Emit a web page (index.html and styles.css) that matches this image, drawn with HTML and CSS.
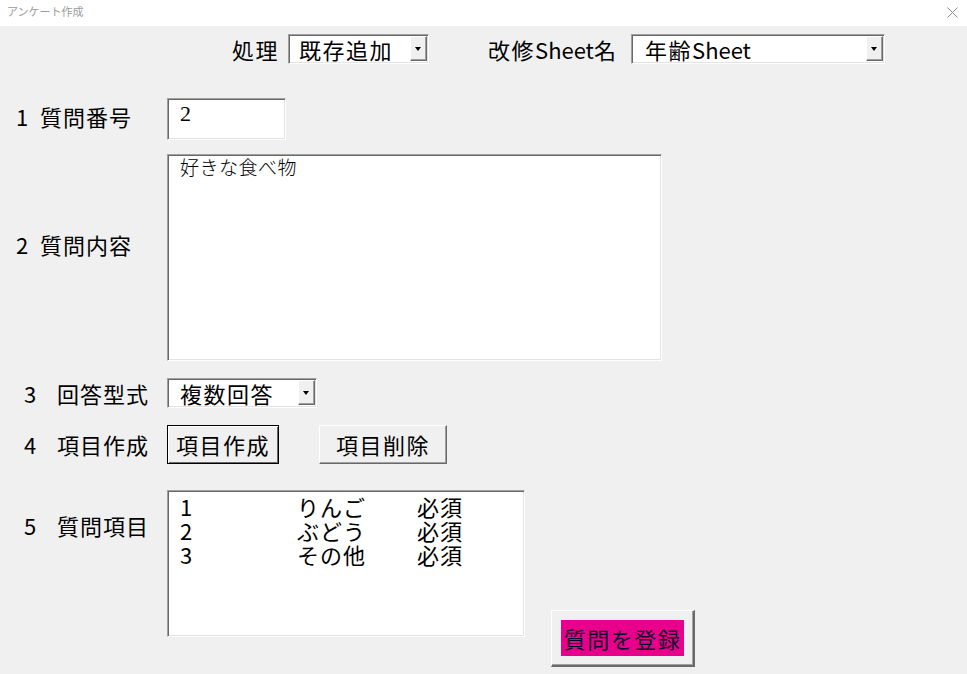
FILE: index.html
```html
<!DOCTYPE html>
<html lang="ja">

<head>
    <meta charset="UTF-8">
    <meta name="viewport" content="width=device-width, initial-scale=1.0">
    <title>アンケート作成</title>
    <link rel="stylesheet" href="styles.css">
</head>

<body>
    <!-- タイトルバー -->
    <div class="titlebar">
        <span class="title">アンケート作成</span>
        <svg class="close" width="11" height="11" viewBox="0 0 11 11">
            <path d="M0.5 0.5 L10.5 10.5 M10.5 0.5 L0.5 10.5" stroke="#8a8a8a" stroke-width="1" fill="none" />
        </svg>
    </div>

    <div class="form">
        <!-- 処理 / 改修Sheet名 -->
        <div class="top-row">
            <span class="cap cap-mode">処理</span>
            <div class="combo combo-mode"><span class="val">既存追加</span><i class="drop"></i></div>
            <span class="cap cap-sheet">改修<span class="latin">Sheet</span>名</span>
            <div class="combo combo-sheet"><span class="val">年齢<span class="latin">Sheet</span></span><i class="drop"></i></div>
        </div>

        <!-- 1 質問番号 -->
        <div class="row row-no">
            <div class="lbl lbl-a lbl-no"><span class="num">1</span>質問番号</div>
            <div class="box field-no">2</div>
        </div>

        <!-- 2 質問内容 -->
        <div class="row row-text">
            <div class="lbl lbl-a lbl-up"><span class="num">2</span>質問内容</div>
            <div class="box field-text">好きな食べ物</div>
        </div>

        <!-- 3 回答型式 -->
        <div class="row row-type">
            <div class="lbl lbl-b"><span class="num">3</span>回答型式</div>
            <div class="combo combo-type"><span class="val">複数回答</span><i class="drop"></i></div>
        </div>

        <!-- 4 項目作成 -->
        <div class="row row-btns">
            <div class="lbl lbl-b"><span class="num">4</span>項目作成</div>
            <button class="btn btn-make">項目作成</button>
            <button class="btn btn-del">項目削除</button>
        </div>

        <!-- 5 質問項目 -->
        <div class="row row-items">
            <div class="lbl lbl-b lbl-top"><span class="num">5</span>質問項目</div>
            <div class="box listbox">
                <div class="item"><span>1</span><span>りんご</span><span>必須</span></div>
                <div class="item"><span>2</span><span>ぶどう</span><span>必須</span></div>
                <div class="item"><span>3</span><span>その他</span><span>必須</span></div>
            </div>
            <button class="btn btn-save"><span class="mark">質問を登録</span></button>
        </div>
    </div>
</body>

</html>
```

FILE: styles.css
```css
* {
    box-sizing: border-box;
}

body {
    margin: 0;
    background: #f0f0f0;
    font-family: "Noto Sans CJK JP", "Liberation Sans", sans-serif;
    font-size: 22px;
    line-height: 1.2;
    color: #000;
    height: 674px;
    overflow: hidden;
}

/* タイトルバー */
.titlebar {
    height: 26px;
    background: #fff;
    display: flex;
    align-items: center;
    justify-content: space-between;
    padding: 0 9px 2px 7px;
}

.title {
    font-size: 11px;
    color: #9a9a9a;
}

.close {
    display: block;
}

/* 上段 */
.top-row {
    display: flex;
    align-items: center;
    margin-top: 8px;
    padding-left: 232px;
    letter-spacing: 1.5px;
}

.cap-mode {
    width: 56px;
}

.cap-sheet {
    width: 143px;
    margin-left: 59px;
}

.latin {
    letter-spacing: 0;
}

/* へこみ枠 */
.box,
.combo {
    background: #fff;
    border: 1px solid;
    border-color: #a0a0a0 #fff #fff #a0a0a0;
    box-shadow: inset 1px 1px 0 #696969, inset -1px -1px 0 #e3e3e3;
}

/* コンボボックス */
.combo {
    display: flex;
    align-items: stretch;
    height: 30px;
    padding: 1px 1px 2px 10px;
}

.combo .val {
    flex: 1;
    display: flex;
    align-items: center;
    letter-spacing: 1.5px;
    padding-top: 1px;
}

.combo-sheet .val {
    padding-left: 3px;
}

.drop {
    position: relative;
    width: 17px;
    flex: none;
    background: #f0f0f0;
    border-style: solid;
    border-width: 1px;
    border-color: #fff #696969 #696969 #fff;
    box-shadow: inset -1px -1px 0 #a0a0a0;
}

.drop::after {
    content: '';
    position: absolute;
    left: 4px;
    top: 50%;
    margin-top: -2px;
    border-left: 3.5px solid transparent;
    border-right: 3.5px solid transparent;
    border-top: 4px solid #000;
}

.combo-mode {
    width: 141px;
}

.combo-sheet {
    width: 254px;
}

.combo-type {
    width: 150px;
    padding-left: 12px;
}

/* 行 */
.row {
    display: flex;
    align-items: center;
}

.lbl {
    width: 167px;
    flex: none;
    letter-spacing: 1px;
    white-space: nowrap;
}

.lbl .num {
    display: inline-block;
}

.lbl-a {
    padding-left: 16px;
}

.lbl-a .num {
    width: 24px;
}

.lbl-b {
    padding-left: 24px;
}

.lbl-b .num {
    width: 33px;
}

.lbl-no {
    margin-bottom: 6px;
}

.lbl-up {
    margin-bottom: 26px;
}

.lbl-top {
    align-self: flex-start;
    margin-top: 22px;
}

.row-no {
    margin-top: 34px;
}

.field-no {
    width: 119px;
    height: 42px;
    padding: 2px 12px;
    font-family: "Liberation Serif", "DejaVu Serif", serif;
    font-size: 22px;
}

.row-text {
    margin-top: 14px;
}

.field-text {
    width: 495px;
    height: 207px;
    padding: 1px 12px;
    font-size: 19px;
    font-weight: 300;
    letter-spacing: 0.5px;
}

.row-type {
    margin-top: 17px;
}

.row-btns {
    margin-top: 17px;
}

/* ボタン */
.btn {
    font: inherit;
    color: #000;
    letter-spacing: 1.5px;
    background: #f0f0f0;
    border: 1px solid;
    border-color: #fff #696969 #696969 #fff;
    box-shadow: inset -1px -1px 0 #a0a0a0;
    padding: 0;
    height: 39px;
}

.btn-make {
    width: 112px;
    border-color: #000;
    box-shadow: inset 1px 1px 0 #fff, inset -1px -1px 0 #696969;
}

.btn-del {
    width: 128px;
    margin-left: 40px;
}

/* リストボックス */
.row-items {
    margin-top: 26px;
    align-items: flex-start;
}

.listbox {
    width: 358px;
    height: 147px;
    padding: 3px 12px;
}

.item {
    display: grid;
    grid-template-columns: 117px 120px auto;
    line-height: 24px;
    letter-spacing: 1px;
}

.btn-save {
    width: 144px;
    height: 57px;
    margin-left: 26px;
    margin-top: 120px;
    border-width: 1px 2px 2px 1px;
    border-color: #fff #6a6a6a #6a6a6a #fff;
}

.mark {
    background: #e8008c;
    color: #10052a;
    padding: 2px 3px 2px 3px;
    letter-spacing: 1.5px;
}
```
